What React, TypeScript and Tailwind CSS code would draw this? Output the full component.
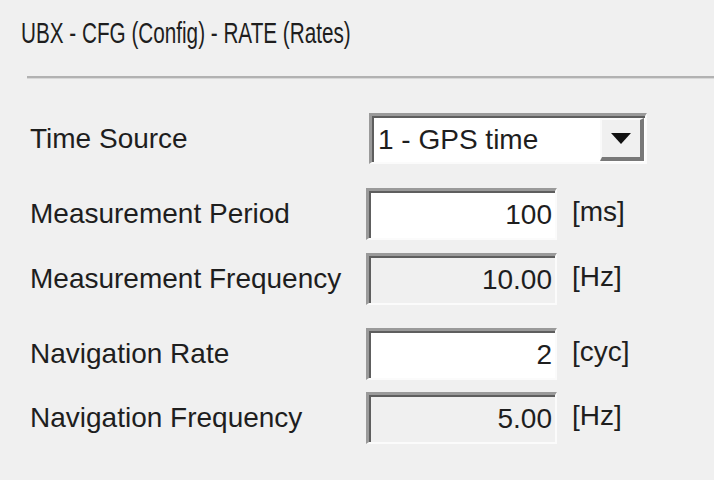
import React from "react";

const font = { fontFamily: '"Liberation Sans", Arial, sans-serif' };

function Edit({ value, disabled }: { value: string; disabled?: boolean }) {
  return (
    <div
      className={`w-[191px] h-[52px] border-t-[3px] border-l-[3px] border-r-[2px] border-b-[2px] border-t-[#9a9a9a] border-l-[#9a9a9a] border-r-[#fbfbfb] border-b-[#fbfbfb] shadow-[inset_2px_2px_0_#5e5e5e] flex items-center justify-end pr-[3px] text-[28px] leading-none text-[#1e1e1e] ${
        disabled ? "bg-[#f0f0f0]" : "bg-white"
      }`}
    >
      {value}
    </div>
  );
}

function Row({
  label,
  children,
  className,
}: {
  label: string;
  children: React.ReactNode;
  className?: string;
}) {
  return (
    <div className={`flex items-center ${className ?? ""}`}>
      <div className="w-[366px] pl-[30px] text-[28px] leading-none text-[#1e1e1e]">
        {label}
      </div>
      {children}
    </div>
  );
}

function Unit({ text }: { text: string }) {
  return (
    <span className="ml-[15px] text-[28px] leading-none text-[#1e1e1e] -mt-[4px]">
      {text}
    </span>
  );
}

export default function App() {
  return (
    <div className="w-[714px] h-[480px] bg-[#f0f0f0] overflow-hidden flex flex-col" style={font}>
      {/* title */}
      <div className="h-[40px] mt-[13px] pl-[21px] flex items-center">
        <span className="inline-block origin-left scale-x-[0.69] text-[30px] leading-none text-[#1e1e1e] whitespace-nowrap">
          UBX - CFG (Config) - RATE (Rates)
        </span>
      </div>
      <div className="mt-[23px] ml-[27px] h-[3px] bg-[#b2b2b2] border-b border-b-[#d8d8d8]" />

      {/* time source */}
      <Row label="Time Source" className="mt-[34px]">
        <div className="ml-[3px] w-[278px] h-[51px] bg-white border-t-[3px] border-l-[3px] border-r-[2px] border-b-[2px] border-t-[#9a9a9a] border-l-[#9a9a9a] border-r-[#fbfbfb] border-b-[#fbfbfb] shadow-[inset_2px_2px_0_#5e5e5e] flex items-stretch">
          <div className="flex-1 flex items-center pl-[6px] pt-[2px] text-[28px] leading-none text-[#1e1e1e]">
            1 - GPS time
          </div>
          <div className="w-[44px] mt-[2px] mb-[1px] mr-[1px] bg-[#f0f0f0] border-l-2 border-t-2 border-l-[#fafafa] border-t-[#fafafa] border-r-[4px] border-b-[4px] border-r-[#787878] border-b-[#787878] flex items-center justify-center">
            <svg width="20" height="11" viewBox="0 0 20 11">
              <polygon points="0,0 20,0 10,11" fill="#111" />
            </svg>
          </div>
        </div>
      </Row>

      <Row label="Measurement Period" className="mt-[24px]">
        <Edit value="100" />
        <Unit text="[ms]" />
      </Row>

      <Row label="Measurement Frequency" className="mt-[13px]">
        <Edit value="10.00" disabled />
        <Unit text="[Hz]" />
      </Row>

      <Row label="Navigation Rate" className="mt-[23px]">
        <Edit value="2" />
        <Unit text="[cyc]" />
      </Row>

      <Row label="Navigation Frequency" className="mt-[12px]">
        <Edit value="5.00" disabled />
        <Unit text="[Hz]" />
      </Row>
    </div>
  );
}
